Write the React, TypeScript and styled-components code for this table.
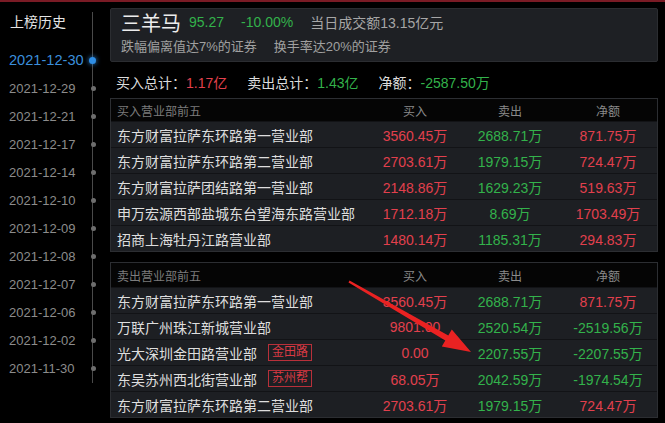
import styled, { createGlobalStyle } from "styled-components";

const GlobalStyle = createGlobalStyle`
  body {
    margin: 0;
    background: #000;
    font-family: "Liberation Sans", "Noto Sans CJK SC", sans-serif;
  }
`;

const Page = styled.div`
  position: relative;
  width: 665px;
  height: 423px;
  overflow: hidden;
  background: #000;
  display: flex;
  flex-direction: column;
`;

const TopLine = styled.div`
  height: 2px;
  background: #7a1b25;
`;

const Body = styled.div`
  display: flex;
  flex: 1;
`;

const Sidebar = styled.div`
  position: relative;
  width: 110px;
  flex-shrink: 0;
  padding-top: 10px;
  &::after {
    content: "";
    position: absolute;
    left: 92px;
    top: 10px;
    width: 1px;
    height: 371px;
    background: #4a4a4a;
  }
`;

const SidebarTitle = styled.div`
  padding-left: 10px;
  height: 20px;
  line-height: 20px;
  font-size: 14px;
  color: #e4e4e4;
`;

const DateList = styled.ul`
  list-style: none;
  margin: 14px 0 0;
  padding: 0;
`;

const DateItem = styled.li<{ $active?: boolean }>`
  position: relative;
  height: 28px;
  display: flex;
  align-items: center;
  padding-left: 9px;
  font-size: ${(p) => (p.$active ? "14.6px" : "13px")};
  color: ${(p) => (p.$active ? "#3b8fdc" : "#8c8c8c")};
`;

const Dot = styled.span<{ $active?: boolean }>`
  position: absolute;
  z-index: 1;
  left: ${(p) => (p.$active ? "89px" : "90.5px")};
  top: 50%;
  width: ${(p) => (p.$active ? "7px" : "5px")};
  height: ${(p) => (p.$active ? "7px" : "5px")};
  margin-top: ${(p) => (p.$active ? "-3.5px" : "-2.5px")};
  border-radius: 50%;
  background: ${(p) => (p.$active ? "#2f8ee6" : "#6e6e6e")};
  box-shadow: ${(p) => (p.$active ? "0 0 4px 1px rgba(47,142,230,0.6)" : "none")};
`;

const Main = styled.div`
  width: 548px;
  padding-top: 6px;
  display: flex;
  flex-direction: column;
`;

const InfoBox = styled.div`
  box-sizing: border-box;
  height: 54px;
  padding: 1px 10px 0;
  background: #1e2024;
  border: 1px solid #2b2d31;
  border-radius: 2px;
`;

const InfoLine = styled.div<{ $h: number }>`
  height: ${(p) => p.$h}px;
  display: flex;
  align-items: center;
  gap: 17px;
  white-space: nowrap;
`;

const StockName = styled.span`
  font-size: 20px;
  color: #ececec;
  margin-right: -9px;
`;

const Value = styled.span<{ $c: string; $size?: number }>`
  font-size: ${(p) => p.$size ?? 14}px;
  color: ${(p) => p.$c};
`;

const TotalsRow = styled.div`
  box-sizing: border-box;
  height: 36px;
  padding: 4px 0 0 6px;
  display: flex;
  align-items: center;
  gap: 20px;
  font-size: 14px;
  white-space: nowrap;
`;

const TotalLabel = styled.span`
  color: #dcdcdc;
`;

const Table = styled.div<{ $gap?: number }>`
  margin-top: ${(p) => p.$gap ?? 0}px;
  border: 1px solid #2c2e32;
`;

const Row = styled.div<{ $head?: boolean; $h?: number }>`
  display: grid;
  grid-template-columns: 1fr 92px 98px 98px;
  align-items: center;
  height: ${(p) => (p.$head ? p.$h ?? 24 : 25)}px;
  background: ${(p) => (p.$head ? "#050505" : "#1d1f23")};
  border-top: ${(p) => (p.$head ? "none" : "1px solid #121316")};
  font-size: ${(p) => (p.$head ? 12 : 14)}px;
  white-space: nowrap;
`;

const NameCell = styled.div<{ $head?: boolean }>`
  padding-left: 6px;
  display: flex;
  align-items: center;
  gap: 11px;
  color: ${(p) => (p.$head ? "#7c7c7c" : "#dedede")};
`;

const NumCell = styled.div<{ $c: string }>`
  text-align: center;
  color: ${(p) => p.$c};
`;

const Tag = styled.span`
  font-size: 12px;
  line-height: 15px;
  padding: 0 3px;
  color: #d83a44;
  border: 1px solid #b8303a;
`;

const ArrowLayer = styled.svg`
  position: absolute;
  left: 0;
  top: 0;
  pointer-events: none;
`;

const RED = "#e2404d";
const GREEN = "#33b24b";
const HEAD = "#8a8a8a";

const dates = [
  "2021-12-30",
  "2021-12-29",
  "2021-12-21",
  "2021-12-17",
  "2021-12-14",
  "2021-12-10",
  "2021-12-09",
  "2021-12-08",
  "2021-12-07",
  "2021-12-06",
  "2021-12-02",
  "2021-11-30",
];

interface Seat {
  name: string;
  tag?: string;
  buy: string;
  sell: string;
  net: string;
}

const buyTop: Seat[] = [
  { name: "东方财富拉萨东环路第一营业部", buy: "3560.45万", sell: "2688.71万", net: "871.75万" },
  { name: "东方财富拉萨东环路第二营业部", buy: "2703.61万", sell: "1979.15万", net: "724.47万" },
  { name: "东方财富拉萨团结路第一营业部", buy: "2148.86万", sell: "1629.23万", net: "519.63万" },
  { name: "申万宏源西部盐城东台望海东路营业部", buy: "1712.18万", sell: "8.69万", net: "1703.49万" },
  { name: "招商上海牡丹江路营业部", buy: "1480.14万", sell: "1185.31万", net: "294.83万" },
];

const sellTop: Seat[] = [
  { name: "东方财富拉萨东环路第一营业部", buy: "3560.45万", sell: "2688.71万", net: "871.75万" },
  { name: "万联广州珠江新城营业部", buy: "9801.00", sell: "2520.54万", net: "-2519.56万" },
  { name: "光大深圳金田路营业部", tag: "金田路", buy: "0.00", sell: "2207.55万", net: "-2207.55万" },
  { name: "东吴苏州西北街营业部", tag: "苏州帮", buy: "68.05万", sell: "2042.59万", net: "-1974.54万" },
  { name: "东方财富拉萨东环路第二营业部", buy: "2703.61万", sell: "1979.15万", net: "724.47万" },
];

function SeatTable({ title, rows, gap, headH }: { title: string; rows: Seat[]; gap?: number; headH?: number }) {
  return (
    <Table $gap={gap}>
      <Row $head $h={headH}>
        <NameCell $head>{title}</NameCell>
        <NumCell $c={HEAD}>买入</NumCell>
        <NumCell $c={HEAD}>卖出</NumCell>
        <NumCell $c={HEAD}>净额</NumCell>
      </Row>
      {rows.map((r) => (
        <Row key={r.name + r.buy}>
          <NameCell>
            {r.name}
            {r.tag && <Tag>{r.tag}</Tag>}
          </NameCell>
          <NumCell $c={RED}>{r.buy}</NumCell>
          <NumCell $c={GREEN}>{r.sell}</NumCell>
          <NumCell $c={r.net.startsWith("-") ? GREEN : RED}>{r.net}</NumCell>
        </Row>
      ))}
    </Table>
  );
}

function App() {
  return (
    <Page>
      <GlobalStyle />
      <TopLine />
      <Body>
        <Sidebar>
          <SidebarTitle>上榜历史</SidebarTitle>
          <DateList>
            {dates.map((d, i) => (
              <DateItem key={d} $active={i === 0}>
                {d}
                <Dot $active={i === 0} />
              </DateItem>
            ))}
          </DateList>
        </Sidebar>
        <Main>
          <InfoBox>
            <InfoLine $h={24}>
              <StockName>三羊马</StockName>
              <Value $c={GREEN}>95.27</Value>
              <Value $c={GREEN}>-10.00%</Value>
              <Value $c="#a6a6a6">当日成交额13.15亿元</Value>
            </InfoLine>
            <InfoLine $h={22}>
              <Value $c="#a0a0a0" $size={13}>跌幅偏离值达7%的证券</Value>
              <Value $c="#a0a0a0" $size={13}>换手率达20%的证券</Value>
            </InfoLine>
          </InfoBox>
          <TotalsRow>
            <span>
              <TotalLabel>买入总计：</TotalLabel>
              <Value $c={RED}>1.17亿</Value>
            </span>
            <span>
              <TotalLabel>卖出总计：</TotalLabel>
              <Value $c={GREEN}>1.43亿</Value>
            </span>
            <span>
              <TotalLabel>净额：</TotalLabel>
              <Value $c={GREEN}>-2587.50万</Value>
            </span>
          </TotalsRow>
          <SeatTable title="买入营业部前五" rows={buyTop} headH={22} />
          <SeatTable title="卖出营业部前五" rows={sellTop} gap={10} headH={24} />
        </Main>
      </Body>
      <ArrowLayer width="665" height="423" viewBox="0 0 665 423">
        <polygon
          points="349.5,280.6 448.3,335.4 451.8,329.4 471,352 441.8,346.6 445.3,340.6 348.5,282.4"
          fill="#ea2222"
        />
      </ArrowLayer>
    </Page>
  );
}

export default App;
